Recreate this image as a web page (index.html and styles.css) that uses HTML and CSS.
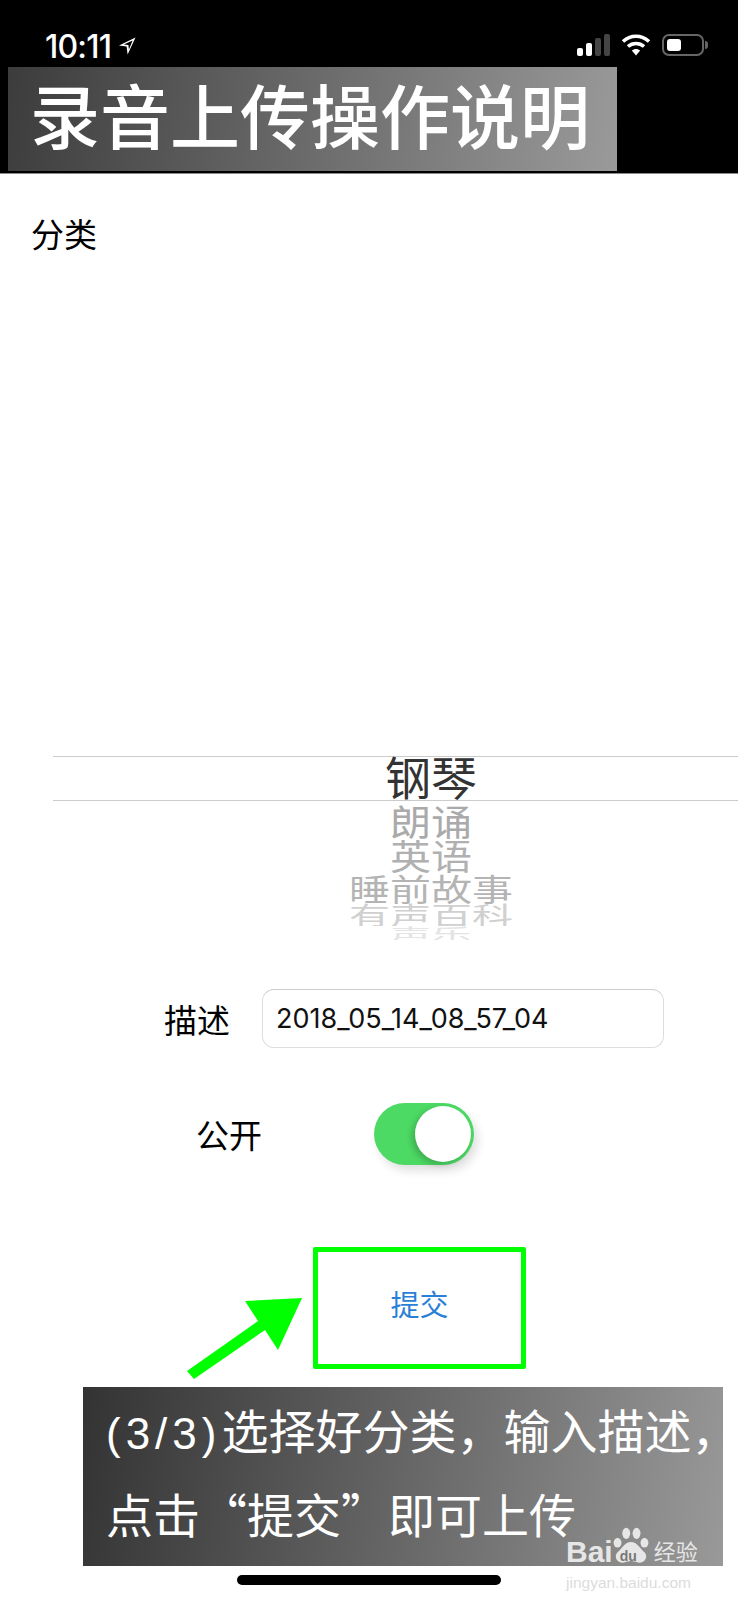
FILE: index.html
```html
<!DOCTYPE html>
<html lang="zh-CN">
<head>
    <meta charset="UTF-8">
    <meta name="viewport" content="width=device-width, initial-scale=1.0">
    <title>录音上传操作说明</title>
    <link rel="stylesheet" href="styles.css">
</head>
<body>
    <header class="status-bar">
        <div class="status-left">
            <span class="clock">10:11</span>
            <svg class="loc-icon" width="20" height="20" viewBox="0 0 20 20">
                <path d="M18.5 1.5 L2 9.6 L9.6 10.6 L10.6 18.5 Z M15.6 4.4 L11.9 13.4 L11.4 8.9 L6.8 8.4 Z" fill="#fff" fill-rule="evenodd"/>
            </svg>
        </div>
        <div class="status-right">
            <div class="signal">
                <i class="bar b1"></i><i class="bar b2"></i><i class="bar b3"></i><i class="bar b4"></i>
            </div>
            <svg class="wifi" width="30" height="24" viewBox="0 0 30 24">
                <path d="M2 8.5 C9.5 1.5 20.5 1.5 28 8.5" fill="none" stroke="#fff" stroke-width="3.6"/>
                <path d="M7 13.5 C11.5 9.5 18.5 9.5 23 13.5" fill="none" stroke="#fff" stroke-width="3.6"/>
                <path d="M10.8 17.6 C13.3 15.4 16.7 15.4 19.2 17.6 L15 22.5 Z" fill="#fff"/>
            </svg>
            <div class="battery"><div class="battery-level"></div></div>
            <div class="battery-cap"></div>
        </div>
    </header>

    <main class="form">
        <div class="cat-label">分类</div>

        <div class="picker">
            <div class="picker-row picker-selected"><span>钢琴</span></div>
            <div class="picker-row row-1"><span>朗诵</span></div>
            <div class="picker-row row-2"><span>英语</span></div>
            <div class="picker-row row-3"><span>睡前故事</span></div>
            <div class="picker-row row-4"><span>有声百科</span></div>
            <div class="picker-row row-5"><span>声乐</span></div>
        </div>

        <div class="desc-row">
            <label class="field-label">描述</label>
            <div class="text-input">2018_05_14_08_57_04</div>
        </div>

        <div class="public-row">
            <label class="field-label">公开</label>
            <div class="toggle"><div class="toggle-knob"></div></div>
        </div>

        <button class="submit-btn">提交</button>
    </main>

    <div class="home-bar"></div>

    <!-- annotations added over the screenshot -->
    <div class="title-banner">录音上传操作说明</div>
    <div class="mark-box"></div>
    <svg class="mark-arrow" width="738" height="1600" viewBox="0 0 738 1600">
        <polygon points="302,1298 245,1301 258,1321 187,1371 194,1379 265,1330 278,1350" fill="#00ff00"/>
    </svg>
    <div class="caption">
        <div class="caption-line"><span class="caption-num">(3/3)</span>选择好分类，输入描述，</div>
        <div class="caption-line">点击“提交”即可上传</div>
    </div>
    <div class="watermark">
        <div class="wm-logo">
            <span class="wm-bai">Bai</span>
            <span class="wm-paw">
                <svg width="48" height="50" viewBox="0 0 48 50">
                    <ellipse cx="7" cy="21" rx="5" ry="6" fill="#e6e6e6"/>
                    <ellipse cx="18" cy="9" rx="5" ry="7" fill="#e6e6e6"/>
                    <ellipse cx="31" cy="9" rx="5" ry="7" fill="#e6e6e6"/>
                    <ellipse cx="41" cy="21" rx="5" ry="6" fill="#e6e6e6"/>
                    <path d="M24 20 C32 20 35 28 41 33 C46 38 42 47 34 46 C29 45 27 44 24 44 C21 44 19 45 14 46 C6 47 2 38 7 33 C13 28 16 20 24 20 Z" fill="#e6e6e6"/>
                </svg>
                <span class="wm-du">du</span>
            </span>
            <span class="wm-jy">经验</span>
        </div>
        <div class="wm-url">jingyan.baidu.com</div>
    </div>
</body>
</html>
```

FILE: styles.css
```css
html, body { margin: 0; padding: 0; }
body { width: 738px; height: 1600px; overflow: hidden; position: relative; background: #fff; color: #000; font-family: "Noto Sans CJK SC", "Noto Sans", sans-serif; }

/* status bar */
.status-bar { height: 174px; background: #000; border-bottom: 1px solid #8a8a8a; color: #fff; display: flex; justify-content: space-between; align-items: flex-start; padding: 0 30px 0 45px; box-sizing: border-box; }
.status-left { display: flex; align-items: center; gap: 6px; margin-top: 27px; height: 38px; }
.clock { font-family: Inter, Roboto, sans-serif; font-size: 32px; font-weight: 500; letter-spacing: -.8px; }
.loc-icon { width: 20px; height: 20px; }
.status-right { display: flex; align-items: center; margin-top: 31px; height: 28px; }
.signal { display: flex; align-items: flex-end; gap: 3px; height: 22px; }
.bar { display: block; width: 6px; border-radius: 2px; }
.b1 { height: 8px; background: #fff; }
.b2 { height: 13px; background: #fff; }
.b3 { height: 18px; background: #444; }
.b4 { height: 22px; background: #444; }
.wifi { margin-left: 11px; }
.battery { width: 42px; height: 22px; margin-left: 11px; border: 2px solid #666; border-radius: 7px; padding: 3px; box-sizing: border-box; }
.battery-level { width: 14px; height: 100%; background: #fff; border-radius: 3px; }
.battery-cap { width: 3px; height: 8px; margin-left: 1px; background: #666; border-radius: 0 3px 3px 0; }

/* form */
.form { display: flex; flex-direction: column; }
.cat-label { font-size: 33px; line-height: 46px; margin: 36px 0 0 31px; }

.picker { margin: 500px 0 0 53px; height: 184px; overflow: hidden; }
.picker-row { display: flex; justify-content: center; align-items: center; padding-left: 71px; width: 614px; white-space: nowrap; font-size: 41px; }
.picker-row span { display: inline-block; }
.picker-selected { height: 45px; color: #333; font-size: 46px; border-top: 1px solid #ccc; border-bottom: 1px solid #ccc; box-sizing: border-box; width: 685px; justify-content: flex-start; }
.picker-selected span { margin: 0 0 7px 261px; line-height: 38px; }
.row-1 { height: 37px; color: #aaa; }
.row-1 span { transform: scaleY(.9); }
.row-2 { height: 34px; color: #b0b0b0; }
.row-2 span { transform: scaleY(.85); }
.row-3 { height: 30px; color: #b4b4b4; }
.row-3 span { transform: scaleY(.75); }
.row-4 { height: 24px; color: #d0d0d0; overflow: hidden; }
.row-4 span { transform: scaleY(.6); }
.row-5 { height: 14px; color: #e4e4e4; overflow: hidden; }
.row-5 span { transform: scaleY(.4); }

.desc-row { display: flex; align-items: center; gap: 32px; margin: 49px 0 0 164px; }
.field-label { font-size: 33px; line-height: 46px; }
.text-input { width: 402px; height: 59px; box-sizing: border-box; border: 1px solid #ddd; border-top-color: #ccc; border-radius: 12px; padding-left: 13px; font-family: Inter, Roboto, sans-serif; font-size: 27px; line-height: 57px; color: #111; }

.public-row { display: flex; align-items: center; gap: 112px; margin: 55px 0 0 196px; }
.toggle { width: 100px; height: 62px; background: #4cd964; border-radius: 31px; padding: 3px; box-sizing: border-box; display: flex; justify-content: flex-end; box-shadow: 4px 6px 10px rgba(0,0,0,.12); }
.toggle-knob { width: 56px; height: 56px; background: #fff; border-radius: 50%; box-shadow: -3px 3px 6px rgba(0,0,0,.2); }

.submit-btn { align-self: flex-start; margin: 77px 0 0 313px; width: 213px; height: 122px; background: none; border: 0; padding: 0; font-family: inherit; font-size: 29px; color: #2a7fd6; }

.home-bar { position: absolute; left: 237px; top: 1575px; width: 264px; height: 10px; background: #000; border-radius: 5px; }

/* annotations */
.title-banner { position: absolute; left: 8px; top: 67px; width: 609px; height: 104px; box-sizing: border-box; padding-left: 22px; background: linear-gradient(100deg, #3c3c3c, #9a9a9a); color: #fff; font-size: 70px; line-height: 94px; font-weight: 500; white-space: nowrap; }
.mark-box { position: absolute; left: 313px; top: 1247px; width: 213px; height: 122px; box-sizing: border-box; border: 5px solid #00ff00; border-radius: 2px; }
.mark-arrow { position: absolute; left: 0; top: 0; pointer-events: none; }
.caption { position: absolute; left: 83px; top: 1387px; width: 640px; height: 179px; box-sizing: border-box; padding: 0 0 0 23px; background: linear-gradient(100deg, #333, #999); color: #fff; font-size: 47px; white-space: nowrap; overflow: hidden; }
.caption-line { line-height: 84px; height: 84px; }
.caption-num { font-family: "Liberation Sans", sans-serif; letter-spacing: 5px; font-size: 44px; }

.watermark { position: absolute; left: 566px; top: 1516px; width: 132px; color: #e6e6e6; font-family: "Liberation Sans", "Noto Sans CJK SC", sans-serif; }
.wm-logo { display: flex; align-items: flex-end; height: 52px; }
.wm-bai { font-size: 30px; font-weight: 700; line-height: 32px; }
.wm-paw { position: relative; width: 38px; height: 50px; margin-left: -1px; }
.wm-paw svg { width: 38px; height: 44px; position: absolute; left: 0; top: 6px; }
.wm-du { position: absolute; left: 8px; top: 30px; font-size: 14px; font-weight: 700; color: #777; line-height: 16px; }
.wm-jy { font-size: 22px; line-height: 30px; margin-left: 4px; }
.wm-url { font-size: 15.5px; line-height: 20px; color: #dcdcdc; margin-top: 5px; white-space: nowrap; }
```
